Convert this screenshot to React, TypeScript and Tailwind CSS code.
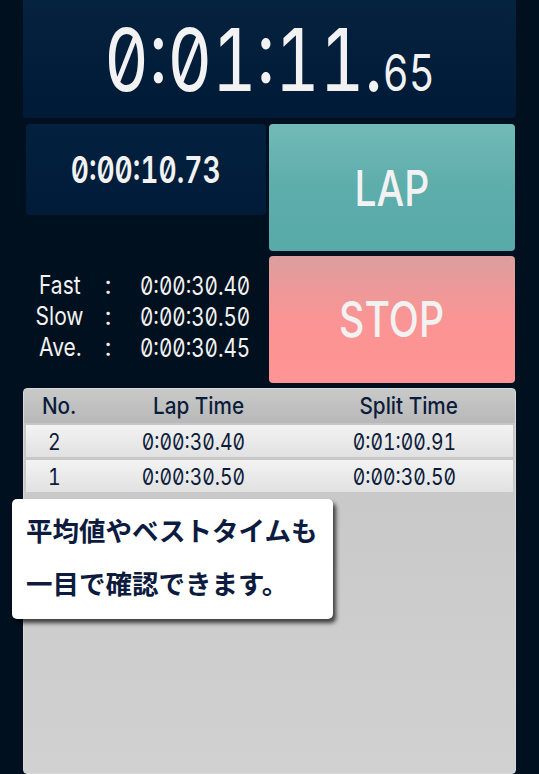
import type { ReactNode } from "react";

const digits = "font-['Inter','Noto_Sans',sans-serif] tabular-nums slashed-zero";

const stats = [
  { label: "Fast", value: "0:00:30.40" },
  { label: "Slow", value: "0:00:30.50" },
  { label: "Ave.", value: "0:00:30.45" },
];

const laps = [
  { no: 2, lap: "0:00:30.40", split: "0:01:00.91" },
  { no: 1, lap: "0:00:30.50", split: "0:00:30.50" },
];

// The app's face is a condensed one; squeeze Inter sideways to get close.
function Narrow({ children, className = "" }: { children: ReactNode; className?: string }) {
  return <span className={`inline-block whitespace-nowrap ${className}`}>{children}</span>;
}

export default function App() {
  return (
    <div className="relative flex h-[774px] w-[539px] flex-col overflow-hidden bg-[#01101f] px-[23px] text-[#f2f2f2]">
      {/* running total */}
      <div className="flex h-[118px] shrink-0 items-center justify-center rounded-b-[4px] bg-linear-to-b from-[#05223f] to-[#001a37]">
        <Narrow className={`${digits} scale-x-[0.8] pt-[2px] text-[86px] leading-none`}>
          0:01:11.<span className="text-[50px]">65</span>
        </Narrow>
      </div>

      <div className="mt-[6px] flex shrink-0 gap-[3px]">
        <div className="flex w-[243px] flex-col pl-[3px]">
          <div className="flex h-[91px] items-center justify-center rounded-[4px] bg-linear-to-b from-[#03213f] to-[#001b38]">
            <Narrow className={`${digits} scale-x-[0.76] text-[37px] font-semibold leading-none`}>
              0:00:10.73
            </Narrow>
          </div>

          <div className="mt-[55px] grid grid-cols-[66px_32px_1fr] text-[25px] leading-[30px]">
            {stats.map((s) => (
              <div key={s.label} className="contents">
                <div className="flex justify-center pl-[2px]">
                  <Narrow className="font-['Inter',sans-serif] scale-x-[0.84]">{s.label}</Narrow>
                </div>
                <div className="flex justify-center font-['Inter',sans-serif]">:</div>
                <div className="pl-[16px]">
                  <Narrow className={`${digits} origin-left scale-x-[0.825]`}>{s.value}</Narrow>
                </div>
              </div>
            ))}
          </div>
        </div>

        <div className="flex w-[246px] flex-col gap-[5px]">
          <button className="flex h-[127px] items-center justify-center rounded-[4px] bg-linear-to-b from-[#72bab8] via-[#5dadab] to-[#57aaa8]">
            <Narrow className="font-['Inter',sans-serif] scale-x-[0.78] pt-[2px] text-[50px] font-medium">LAP</Narrow>
          </button>
          <button className="flex h-[127px] items-center justify-center rounded-[4px] bg-linear-to-b from-[#dc9e9e] via-[#fb9494] to-[#ff9494]">
            <Narrow className="font-['Inter',sans-serif] scale-x-[0.8] text-[49px] font-medium">STOP</Narrow>
          </button>
        </div>
      </div>

      {/* lap table */}
      <div className="mt-[5px] flex flex-1 flex-col overflow-hidden rounded-[4px] border border-[#d9d9d9] bg-linear-to-b from-[#c6c6c6] to-[#d1d1d1] text-[#0b1c3b]">
        <div className="grid h-[34px] shrink-0 grid-cols-[65px_210px_1fr] items-center bg-linear-to-b from-[#c9c9c9] to-[#b8b8b8] text-[23px]">
          {["No.", "Lap Time", "Split Time"].map((h, i) => (
            <div
              key={h}
              className={i === 0 ? "flex justify-center pl-[6px]" : i === 1 ? "flex justify-center pl-[10px]" : "flex justify-center pl-[4px]"}
            >
              <Narrow className="font-['Inter',sans-serif] scale-x-[0.9] font-medium">{h}</Narrow>
            </div>
          ))}
        </div>
        <div className="flex flex-col gap-[3px] px-[2px] pt-[2px]">
          {laps.map((l) => (
            <div
              key={l.no}
              className="grid h-[32px] grid-cols-[62px_210px_1fr] items-center bg-linear-to-b from-[#f3f3f3] to-[#e1e1e1] text-[23px]"
            >
              <div className="flex justify-center pr-[6px]">
                <Narrow className={`${digits} scale-x-[0.85]`}>{l.no}</Narrow>
              </div>
              <div className="flex justify-center">
                <Narrow className={`${digits} scale-x-[0.84]`}>{l.lap}</Narrow>
              </div>
              <div className="flex justify-center pr-[2px]">
                <Narrow className={`${digits} scale-x-[0.84]`}>{l.split}</Narrow>
              </div>
            </div>
          ))}
        </div>
      </div>

      {/* callout */}
      <div className="absolute left-[12px] top-[499px] h-[120px] w-[321px] rounded-[5px] bg-white pl-[14px] pt-[4px] shadow-[3px_4px_4px_rgba(0,0,0,0.7)]">
        <p className="font-['Noto_Sans_CJK_JP',sans-serif] text-[26.5px] font-bold leading-[53px] text-[#0c1b3e]">
          平均値やベストタイムも
          <br />
          一目で確認できます。
        </p>
      </div>
    </div>
  );
}
